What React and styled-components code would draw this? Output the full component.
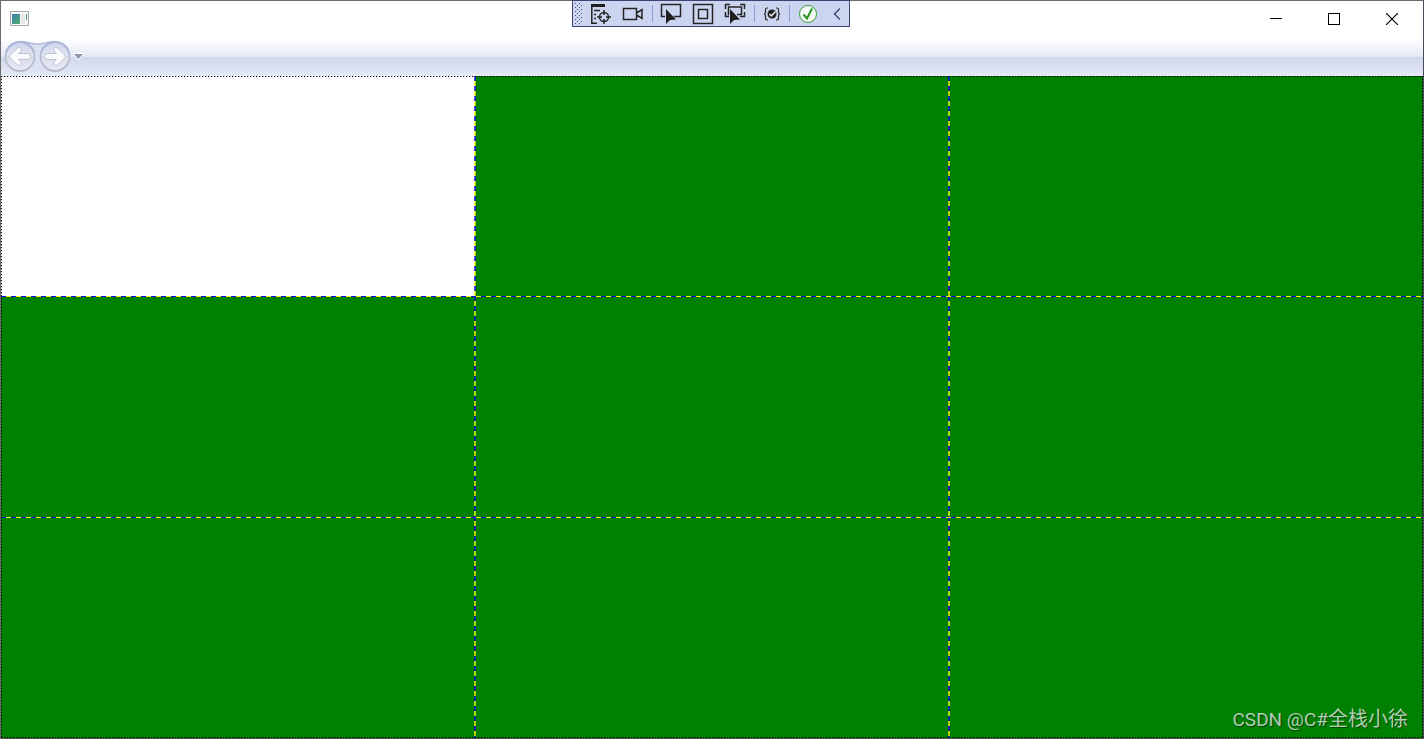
import React from "react";
import styled, { createGlobalStyle } from "styled-components";

const GlobalStyle = createGlobalStyle`
  * { box-sizing: border-box; }
  body { margin: 0; background: #fff; font-family: Roboto, "Noto Sans CJK SC", sans-serif; }
  button { appearance: none; border: 0; padding: 0; margin: 0; background: transparent; color: inherit; }
  svg { display: block; }
`;

const Window = styled.main`
  position: relative;
  display: flex;
  flex-direction: column;
  min-height: 100vh;
  border: 1px solid #6b6b6b;
  border-right-color: #4a4a5c;
  border-bottom: 0;
  background: #fff;
`;

const TitleBar = styled.header`
  display: flex;
  justify-content: space-between;
  align-items: center;
  height: 36px;
  padding: 0 2px 0 9px;
`;

const Controls = styled.div`
  display: flex;
  height: 36px;
`;

const WindowButton = styled.button`
  display: grid;
  place-items: center;
  width: 58px;
`;

const NavBar = styled.nav`
  display: flex;
  align-items: center;
  height: 39px;
  padding-left: 2px;
  background: linear-gradient(#fff 0, #fff 2px, #e3e8f5 20px, #cfd7ec 20px, #e4e8f6 38px, #eceffa 39px);
`;

const NavButtons = styled.div`
  position: relative;
  display: flex;
  height: 35px;
`;

const NavArt = styled.svg`
  position: absolute;
  inset: 0;
  pointer-events: none;
`;

const NavButton = styled.button`
  width: ${(p) => p.$width}px;
`;

const DebugBar = styled.div`
  position: absolute;
  top: -1px;
  left: calc(50% - 140px);
  display: flex;
  align-items: center;
  width: 278px;
  height: 27px;
  padding-left: 2px;
  border: 1px solid #3b4374;
  background: #ccd5f0;
`;

const Grip = styled.span`
  flex: none;
  width: 8px;
  height: 22px;
  margin-right: 6px;
  background:
    conic-gradient(from 270deg at 1px 1px, #4a5480 90deg, transparent 0) 0 0 / 4px 4px,
    conic-gradient(from 270deg at 1px 1px, #4a5480 90deg, transparent 0) 2px 2px / 4px 4px;
`;

const ToolButton = styled.button`
  flex: none;
  display: grid;
  place-items: center;
  width: ${(p) => p.$width || 32}px;
  height: 24px;
`;

const Separator = styled.span`
  flex: none;
  width: 1px;
  height: 17px;
  margin: 0 ${(p) => p.$gap}px;
  background: #8b9cd0;
`;

const Board = styled.section`
  position: relative;
  flex: 1;
  display: grid;
  grid-template: repeat(3, minmax(0, 1fr)) / repeat(3, minmax(0, 1fr));
`;

const Cell = styled.div`
  grid-row: ${(p) => p.$row};
  grid-column: ${(p) => p.$column};
  background: ${(p) => (p.$empty ? "#fff" : "#008000")};
`;

const RowLine = styled.span`
  grid-row: ${(p) => p.$row};
  grid-column: 1 / -1;
  align-self: end;
  height: 1px;
  background: repeating-linear-gradient(90deg, #0000ff 0 5px, #ffff00 5px 10px);
`;

const ColumnLine = styled.span`
  grid-column: ${(p) => p.$column};
  grid-row: 1 / -1;
  justify-self: end;
  width: 2px;
  margin-right: -1px;
  background: repeating-linear-gradient(rgba(0, 0, 255, 0.7) 0 5px, rgba(255, 255, 0, 0.7) 5px 10px);
`;

const dots = (angle) =>
  `repeating-linear-gradient(${angle}, #000 0 1px, rgba(0, 0, 0, 0.3) 1px 2px, transparent 2px 3px)`;

const Outline = styled.span`
  position: absolute;
  inset: 0;
  pointer-events: none;
  border-bottom: 1px solid #4b5a4b;
  background:
    ${dots("90deg")} top / 100% 1px no-repeat,
    ${dots("90deg")} bottom / 100% 1px no-repeat,
    ${dots("180deg")} left / 1px 100% no-repeat,
    ${dots("180deg")} right / 1px 100% no-repeat;
`;

const Watermark = styled.p`
  position: absolute;
  right: 15px;
  bottom: 6px;
  margin: 0;
  font-size: 20px;
  line-height: 26px;
  color: rgba(255, 255, 255, 0.7);
  text-shadow: 1px 1px 1px rgba(0, 0, 0, 0.5);
`;

const Latin = styled.span`
  font-size: 19px;
`;

const AppIcon = () => (
  <svg width="20" height="16" viewBox="0 0 20 16" aria-hidden="true">
    <defs>
      <linearGradient id="pane" x2="1" y2="1">
        <stop stopColor="#3d7fae" /><stop offset="1" stopColor="#4fae70" />
      </linearGradient>
    </defs>
    <rect x=".5" y=".5" width="18" height="14" fill="#f8f8f8" stroke="#a3a6ab" />
    <rect x="2" y="3" width="8" height="10" fill="url(#pane)" />
    <rect x="11" y="3" width="4" height="10" fill="#e8e8e8" />
    <rect x="16" y="3" width="1" height="6" fill="#4b9b91" />
  </svg>
);

const JournalArt = () => (
  <NavArt width="84" height="35" viewBox="0 0 84 35" aria-hidden="true">
    <defs>
      <linearGradient id="disc" x2="0" y2="1">
        <stop stopColor="#cfd6ec" /><stop offset=".5" stopColor="#e2e5f1" /><stop offset=".5" stopColor="#d9ddea" /><stop offset="1" stopColor="#e8ebf6" />
      </linearGradient>
    </defs>
    <path d="M17 2.500C25 2.500 26 5 34.500 5S44 2.500 52 2.500V31C45 31 42 28 34.500 28S25 31 17 31Z" fill="#dbe1f2" />
    <path d="M17 2.500C25 2.500 26 5 34.500 5S44 2.500 52 2.500" fill="none" stroke="#b3bede" strokeWidth="1.500" />
    {[17, 52].map((x) => (
      <g key={x}>
        <circle cx={x} cy="17.500" r="14.500" fill="url(#disc)" stroke="#b9bdd0" strokeWidth="1.800" />
        <path d={`M${x - 13.8} 13A14.500 14.500 0 0 1 ${x + 13.8} 13`} fill="none" stroke="#aab7dc" strokeWidth="1.800" />
      </g>
    ))}
    <path id="arrow" d="M6.800 16.500 14.500 9Q16.500 7.500 18 9.300Q19 11 17.500 12.500L15.500 14.500H25Q27.500 14.500 27.500 17.500T25 20.500H15.500L17.500 22.500Q19 24 18 25.700Q16.500 27.500 14.500 26L6.800 18.500Q6 17.500 6.800 16.500Z" fill="#fafaff" stroke="#bcc0d2" />
    <use href="#arrow" transform="matrix(-1 0 0 1 69 0)" />
    <path d="M69.500 14H81.500L75.500 21.500Z" fill="#fff" />
    <path d="M71 15H80L75.500 20Z" fill="#8e94b0" />
  </NavArt>
);

const ink = { fill: "none", stroke: "#242424", strokeWidth: 1.5 };
const cursor = "M6 6V21L10 17 16 16.500Z";
const ToolIcon = ({ children }) => (
  <svg width="22" height="22" viewBox="0 0 22 22" aria-hidden="true">{children}</svg>
);

export default function App() {
  const cells = Array.from({ length: 9 }, (_, i) => i);
  return (
    <>
      <GlobalStyle />
      <Window>
        <TitleBar>
          <AppIcon />
          <Controls>
            <WindowButton aria-label="Minimize"><svg width="12" height="12"><path d="M0 5.500H12" stroke="#000" /></svg></WindowButton>
            <WindowButton aria-label="Maximize"><svg width="12" height="12"><rect x=".5" y=".5" width="11" height="11" fill="none" stroke="#000" /></svg></WindowButton>
            <WindowButton aria-label="Close"><svg width="12" height="12"><path d="M0 0 12 12M12 0 0 12" stroke="#000" strokeWidth="1.200" /></svg></WindowButton>
          </Controls>
        </TitleBar>
        <NavBar aria-label="Journal">
          <NavButtons>
            <NavButton $width={34} aria-label="Back" />
            <NavButton $width={35} aria-label="Forward" />
            <NavButton $width={15} aria-label="Recent pages" />
            <JournalArt />
          </NavButtons>
        </NavBar>
        <Board>
          {cells.map((i) => (
            <Cell key={i} $row={Math.floor(i / 3) + 1} $column={(i % 3) + 1} $empty={i === 0} />
          ))}
          {[1, 2].map((n) => <ColumnLine key={n} $column={n} />)}
          {[1, 2].map((n) => <RowLine key={n} $row={n} />)}
          <Outline />
          <Watermark><Latin>CSDN @C#</Latin>全栈小徐</Watermark>
        </Board>
        <DebugBar role="toolbar" aria-label="Debug tools">
          <Grip />
          <ToolButton $width={24} aria-label="Go to live visual tree">
            <ToolIcon>
              <path d="M1 1H15V4H1Z" fill="#1e1e1e" />
              <path d="M1.800 4V20.300H7M4 7.500H10M4 11.500H6M4 15.500H6" {...ink} />
              <circle cx="14" cy="14" r="4.500" {...ink} />
              <path d="M14 7V12M14 16V21M7 14H12M16 14H21" {...ink} />
            </ToolIcon>
          </ToolButton>
          <ToolButton $width={37} aria-label="Record">
            <ToolIcon>
              <path d="M2.500 5.500H15.500V16.500H2.500ZM15.500 10 21 6.500V15.500L15.500 12" {...ink} />
            </ToolIcon>
          </ToolButton>
          <Separator $gap={2} />
          <ToolButton aria-label="Select element">
            <ToolIcon>
              <path d="M5 13.500H1.500V1.500H20.500V13.500H14" {...ink} />
              <path d={cursor} fill="#1e1e1e" />
            </ToolIcon>
          </ToolButton>
          <ToolButton aria-label="Display layout adorners">
            <ToolIcon>
              <path d="M1.500 1.500H20.500V20.500H1.500ZM6.500 6.500H15.500V15.500H6.500Z" {...ink} />
            </ToolIcon>
          </ToolButton>
          <ToolButton aria-label="Track focused element">
            <ToolIcon>
              <path d="M1.500 6V1.500H6M16 1.500H20.500V6M1.500 9V13.500H5M20.500 9V13.500H16M5 11.500H4.500V4H17.500V11.500H13" {...ink} />
              <path d={cursor} fill="#1e1e1e" />
            </ToolIcon>
          </ToolButton>
          <Separator $gap={3} />
          <ToolButton $width={28} aria-label="Binding failures">
            <ToolIcon>
              <path d="M7 5H6Q4.500 5 4.500 7V9Q4.500 11 3 11Q4.500 11 4.500 13V15Q4.500 17 6 17H7M15 5H16Q17.500 5 17.500 7V9Q17.500 11 19 11Q17.500 11 17.500 13V15Q17.500 17 16 17H15" {...ink} strokeWidth="1.200" />
              <circle cx="11" cy="11" r="4.500" fill="#242424" />
              <path d="M8.500 11 10.300 13 14.500 8.500" fill="none" stroke="#eef1fb" strokeWidth="1.500" />
            </ToolIcon>
          </ToolButton>
          <Separator $gap={3} />
          <ToolButton $width={30} aria-label="Hot Reload">
            <ToolIcon>
              <circle cx="11" cy="11" r="8.500" fill="#f7f9f8" stroke="#30a030" />
              <path d="M6.500 11.500 10 15.500 15 5.500" fill="none" stroke="#219a21" strokeWidth="2" />
            </ToolIcon>
          </ToolButton>
          <ToolButton $width={26} aria-label="Collapse toolbar">
            <ToolIcon><path d="M15 5.500 9.500 11 15 16.500" fill="none" stroke="#444c7d" strokeWidth="1.500" /></ToolIcon>
          </ToolButton>
        </DebugBar>
      </Window>
    </>
  );
}
